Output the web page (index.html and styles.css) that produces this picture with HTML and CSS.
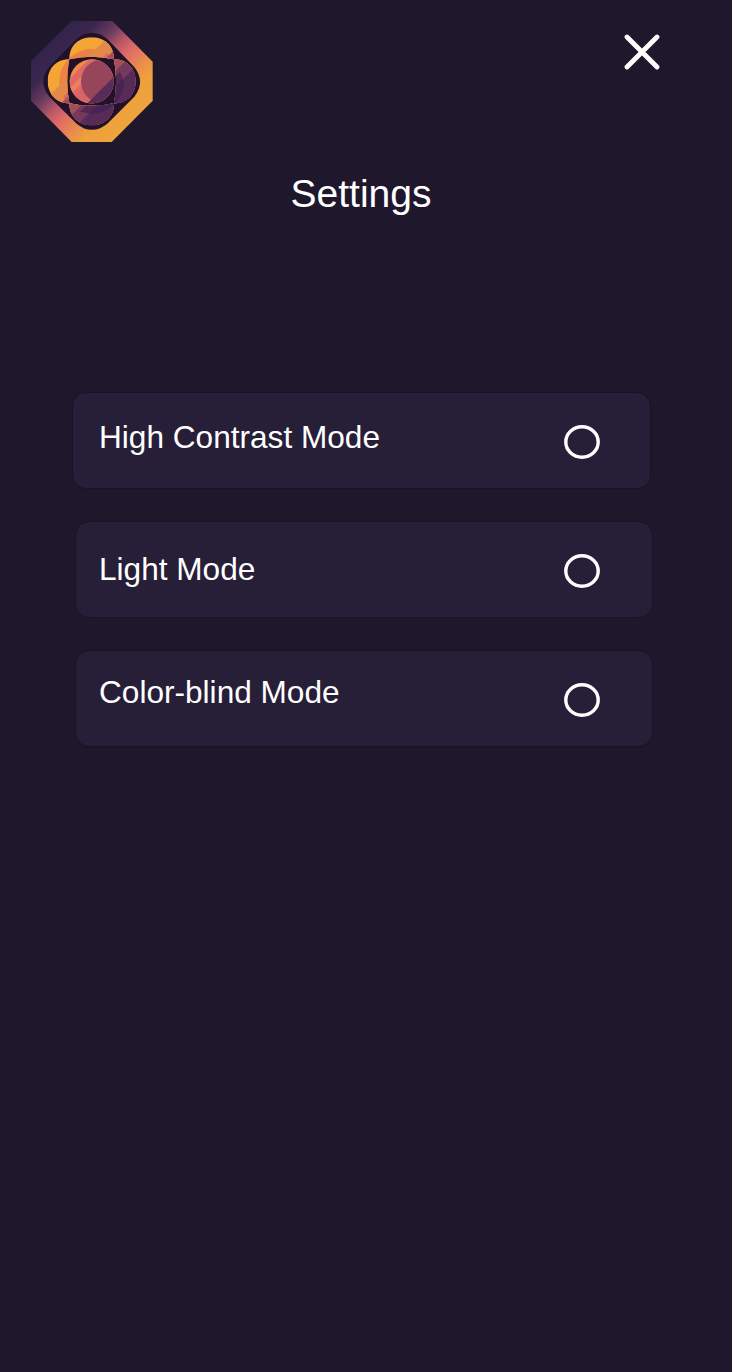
FILE: index.html
```html
<!DOCTYPE html>
<html lang="en">
<head>
<meta charset="utf-8">
<title>Settings</title>
<link rel="stylesheet" href="styles.css">
</head>
<body>
<header class="topbar">
  <svg class="logo" viewBox="30 60 372 372" aria-label="Logo">
    <defs>
      <linearGradient id="frame" gradientUnits="userSpaceOnUse" x1="80" y1="110" x2="340" y2="370">
        <stop offset="0" stop-color="#30234a"/>
        <stop offset=".2" stop-color="#3a264e"/>
        <stop offset=".34" stop-color="#693b5e"/>
        <stop offset=".46" stop-color="#b85768"/>
        <stop offset=".56" stop-color="#df6b68"/>
        <stop offset=".7" stop-color="#ea8b4f"/>
        <stop offset=".8" stop-color="#eda03c"/>
        <stop offset="1" stop-color="#efa43c"/>
      </linearGradient>
      <clipPath id="petals">
        <path d="M148 178C148 135 178 112 215 112S282 135 282 178Q215 163 148 178Z"/>
        <path d="M148 178C105 178 83 210 83 244S105 310 148 310Q135 244 148 178Z"/>
        <path d="M282 178C325 178 347 210 347 244S325 310 282 310Q295 244 282 178Z"/>
        <path d="M148 310C148 352 178 376 215 376S282 352 282 310Q215 325 148 310Z"/>
      </clipPath>
      <clipPath id="core"><circle cx="215" cy="244" r="66"/></clipPath>
    </defs>
    <path fill="url(#frame)" d="M155 63H277L398 185V302L275 426H155L33 302V183Z"/>
    <path fill="#211129" d="M170 117Q215 80 262 117L342 200Q378 244 343 290L262 371Q215 408 170 371L88 290Q52 244 88 200Z"/>
    <g clip-path="url(#petals)">
      <rect x="70" y="100" width="290" height="290" fill="#f3a536"/>
      <circle cx="215" cy="244" r="97" fill="#ec8245"/>
      <path fill="#e38a4a" d="M275 100L70 305V400H360V100Z"/>
      <path fill="#dd6a61" d="M312 244A97 97 0 0 0 261 159L130 290A97 97 0 0 0 312 244Z"/>
      <path fill="#a14f5e" d="M333 100L70 363V400H360V100Z"/>
      <path fill="#75395b" d="M360 140L100 400H360Z"/>
      <path fill="#572b58" d="M360 187L147 400H360Z"/>
      <path fill="#3c2050" fill-opacity=".6" d="M312 244A97 97 0 0 1 215 341L180 335L300 215Z"/>
    </g>
    <g clip-path="url(#core)">
      <rect x="145" y="175" width="140" height="140" fill="#ee8b49"/>
      <path fill="#df6863" d="M220 165L130 255V320H290V165Z"/>
      <path fill="#eb8060" d="M248 165L130 283V305L270 165Z"/>
      <path fill="#d96468" d="M285 165L130 320H290V165Z"/>
      <circle cx="249" cy="244" r="66" fill="#96455b"/>
      <path fill="#592b58" d="M290 222L192 320H290Z"/>
    </g>
  </svg>
  <button class="close" aria-label="Close">
    <svg class="close-icon" viewBox="0 0 36 36"><path d="M3 3L33 33M33 3L3 33"/></svg>
  </button>
</header>
<main>
  <h1 class="title">Settings</h1>
  <div class="options">
    <label class="option option-contrast"><span class="label">High Contrast Mode</span><svg class="radio" viewBox="0 0 36 34"><ellipse cx="18" cy="17" rx="16.2" ry="15.2"/></svg></label>
    <label class="option option-light"><span class="label">Light Mode</span><svg class="radio" viewBox="0 0 36 34"><ellipse cx="18" cy="17" rx="16.2" ry="15.2"/></svg></label>
    <label class="option option-color"><span class="label">Color-blind Mode</span><svg class="radio" viewBox="0 0 36 34"><ellipse cx="18" cy="17" rx="16.2" ry="15.2"/></svg></label>
  </div>
</main>
</body>
</html>
```
FILE: styles.css
```css
* { box-sizing: border-box; }
body {
  margin: 0;
  min-height: 1372px;
  background: #1f172c;
  color: #fff;
  font-family: "Liberation Sans", Arial, sans-serif;
}
.topbar {
  display: flex;
  justify-content: space-between;
  align-items: flex-start;
  height: 171px;
  padding: 20px 72px 0 30px;
}
.logo { width: 124px; height: 124px; }
.close {
  margin: 14px 0 0;
  padding: 0;
  border: 0;
  background: none;
  line-height: 0;
}
.close-icon {
  width: 36px;
  height: 36px;
  fill: none;
  stroke: #fff;
  stroke-width: 4.8;
  stroke-linecap: round;
}
.title {
  margin: 0;
  padding-right: 10px;
  height: 221px;
  font-size: 39px;
  font-weight: 400;
  line-height: 46px;
  text-align: center;
}
.options {
  display: flex;
  flex-direction: column;
  gap: 32px;
  padding-left: 75px;
}
.option {
  display: flex;
  justify-content: space-between;
  align-items: flex-start;
  width: 578px;
  height: 97px;
  padding: 0 52px 0 23px;
  border: 1px solid #1a1224;
  border-radius: 14px;
  background: #271e38;
}
.option-contrast {
  width: 579px;
  margin-left: -3px;
  padding: 0 50px 0 26px;
}
.label {
  font-size: 31.6px;
  line-height: 36px;
}
.option-contrast .label { margin-top: 26px; }
.option-light .label { margin-top: 29px; }
.option-color .label { margin-top: 23px; }
.radio {
  width: 36px;
  height: 34px;
  margin-top: 32px;
  fill: none;
  stroke: #fff;
  stroke-width: 3.4;
}
```
